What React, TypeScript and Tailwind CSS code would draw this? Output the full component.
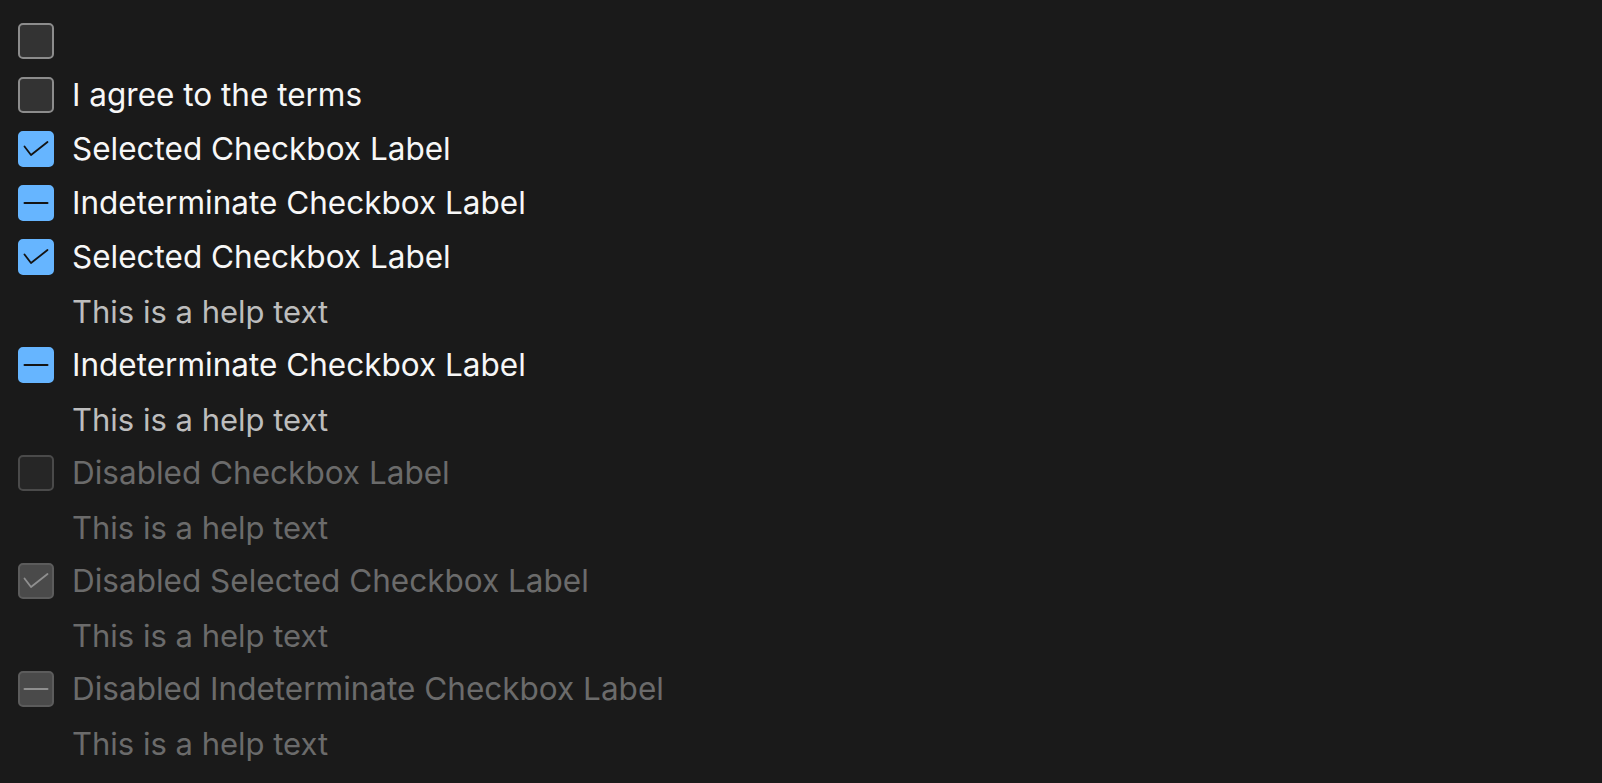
import React from 'react';

type State = 'unchecked' | 'checked' | 'indeterminate';

interface BoxProps {
    state: State;
    disabled?: boolean;
}

function Box({ state, disabled = false }: BoxProps) {
    let cls = 'bg-[#333333] border-[#8c8c8c]';
    let mark = '#141414';
    if (state !== 'unchecked') cls = 'bg-[#66b5ff] border-[#66b5ff]';
    if (disabled) {
        cls = state === 'unchecked' ? 'bg-[#262626] border-[#4a4a4a]' : 'bg-[#4a4a4a] border-[#5c5c5c]';
        mark = '#8f8f8f';
    }

    return (
        <span className={`w-9 h-9 shrink-0 rounded-[5px] border-2 flex items-center justify-center ${cls}`}>
            {state === 'checked' && (
                <svg className="w-8 h-8" viewBox="0 0 32 32" fill="none" stroke={mark} strokeWidth={1.8} strokeLinecap="round" strokeLinejoin="round">
                    <path d="M4.5 13.5l6.5 8.5L27.5 9" />
                </svg>
            )}
            {state === 'indeterminate' && (
                <svg className="w-8 h-8" viewBox="0 0 32 32" fill="none" stroke={mark} strokeWidth={2} strokeLinecap="round">
                    <path d="M4.5 16h23" />
                </svg>
            )}
        </span>
    );
}

interface ItemProps {
    state?: State;
    label?: string;
    help?: string;
    disabled?: boolean;
}

function CheckboxItem({ state = 'unchecked', label, help, disabled = false }: ItemProps) {
    return (
        <div className="flex flex-col">
            <label className="h-[54px] flex items-center gap-[18px]">
                <Box state={state} disabled={disabled} />
                {label && (
                    <span className={disabled ? 'text-[#6b6b6b]' : 'text-[#f7f7f7]'}>{label}</span>
                )}
            </label>
            {help && (
                <p className={`h-[54px] flex items-center pl-[54px] text-[31px] ${disabled ? 'text-[#6b6b6b]' : 'text-[#bdbdbd]'}`}>
                    {help}
                </p>
            )}
        </div>
    );
}

export default function App() {
    return (
        <div
            className="min-h-screen bg-[#1a1a1a] pt-[14px] pl-[18px] text-[31.5px] leading-none"
            style={{ fontFamily: 'Inter, "Noto Sans", sans-serif' }}
        >
            <CheckboxItem />
            <CheckboxItem label="I agree to the terms" />
            <CheckboxItem state="checked" label="Selected Checkbox Label" />
            <CheckboxItem state="indeterminate" label="Indeterminate Checkbox Label" />
            <CheckboxItem state="checked" label="Selected Checkbox Label" help="This is a help text" />
            <CheckboxItem state="indeterminate" label="Indeterminate Checkbox Label" help="This is a help text" />
            <CheckboxItem disabled label="Disabled Checkbox Label" help="This is a help text" />
            <CheckboxItem disabled state="checked" label="Disabled Selected Checkbox Label" help="This is a help text" />
            <CheckboxItem disabled state="indeterminate" label="Disabled Indeterminate Checkbox Label" help="This is a help text" />
        </div>
    );
}
